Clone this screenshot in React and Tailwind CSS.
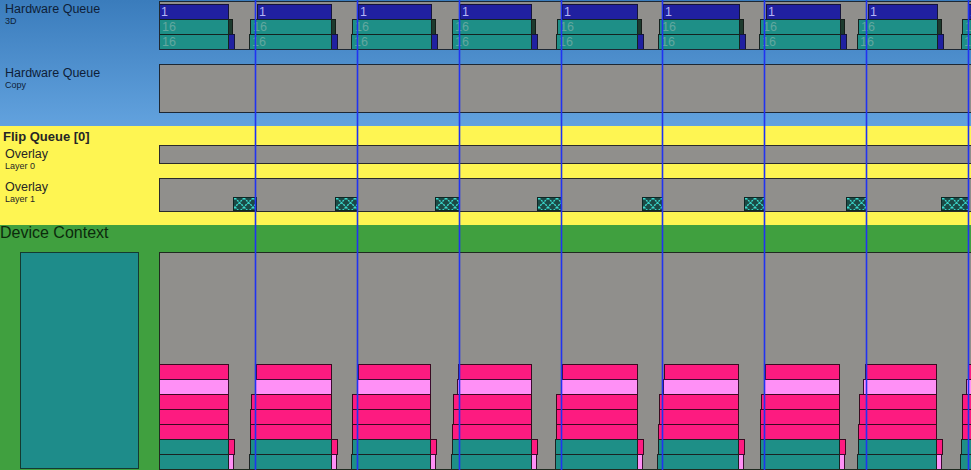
import React from 'react';

// page x of the chart interior (box border sits at 159)
const X0 = 160;
const LINES = [255, 357, 459, 561, 662, 764, 866, 968];

// hardware queue 3D packets [start, end]
const NAVY = [[159, 228], [257, 331], [358, 431], [460, 531], [562, 637], [663, 739], [766, 840], [868, 937], [968, 1010]];
const TEAL_A = [[159, 228], [250, 331], [352, 431], [452, 531], [557, 637], [659, 739], [760, 840], [858, 937], [962, 1010]];
const TEAL_B = [[159, 228], [249, 331], [351, 431], [452, 531], [556, 637], [658, 739], [759, 840], [857, 937], [961, 1010]];

// flip queue overlay layer 1 entries
const FLIPS = [[233, 256], [335, 357], [435, 459], [537, 561], [642, 662], [744, 764], [846, 866], [941, 968]];

// device context stacks: row starts + shared end
const STACKS = [
  { s: [159, 159, 159, 159, 159, 159, 159], e: 228 },
  { s: [256, 255, 251, 250, 250, 250, 249], e: 331 },
  { s: [358, 357, 352, 352, 352, 352, 351], e: 430 },
  { s: [458, 457, 453, 453, 452, 452, 451], e: 531 },
  { s: [562, 561, 556, 556, 556, 555, 555], e: 637 },
  { s: [664, 663, 659, 659, 658, 658, 657], e: 738 },
  { s: [765, 764, 761, 760, 760, 760, 760], e: 839 },
  { s: [865, 863, 859, 859, 858, 858, 857], e: 936 },
  { s: [968, 966, 962, 962, 962, 961, 960], e: 1010 },
];
const STACK_ROWS = [
  'bg-[#fd1b80] border-[#3a0a20]',
  'bg-[#ff90f6] border-[#3a0a30]',
  'bg-[#fd1b80] border-[#3a0a20]',
  'bg-[#fd1b80] border-[#3a0a20]',
  'bg-[#fd1b80] border-[#3a0a20]',
  'bg-[#1e8f87] border-[#1a2222]',
  'bg-[#1e8f87] border-[#1a2222]',
];

function Bar({ x1, x2, top, className, children }) {
  return (
    <div
      className={`absolute h-[16px] border overflow-hidden ${className}`}
      style={{ left: x1 - X0, width: x2 - x1 + 1, top }}
    >
      {children}
    </div>
  );
}

function Label({ title, sub, tone }) {
  return (
    <div className={`w-[159px] shrink-0 pl-[5px] pt-[2px] ${tone}`}>
      <div className="text-[12.5px] leading-[14px]">{title}</div>
      <div className="text-[9px] leading-[11px]">{sub}</div>
    </div>
  );
}

function Hatch({ id }) {
  return (
    <svg width="100%" height="100%" className="block">
      <defs>
        <pattern id={id} x="1" y="0" width="9" height="9" patternUnits="userSpaceOnUse">
          <path d="M0 0L9 9M9 0L0 9" stroke="#3ad8cc" strokeWidth="1.4" strokeDasharray="2 1" />
        </pattern>
      </defs>
      <rect width="100%" height="100%" fill={`url(#${id})`} />
    </svg>
  );
}

export default function App() {
  return (
    <div className="relative w-[971px] h-[470px] overflow-hidden font-['Liberation_Sans',Arial,sans-serif]">
      {/* Hardware queues */}
      <div className="h-[126px] flex flex-col bg-linear-to-b from-[#3a7cbc] to-[#62a2de]">
        <div className="flex h-[50px]">
          <Label title="Hardware Queue" sub="3D" tone="text-[#0e1e38]" />
          <div className="relative mt-[1px] h-[49px] w-[830px] shrink-0 border border-[#1d2733] bg-[#908f8c] overflow-hidden">
            {NAVY.map(([a, b], i) => (
              <Bar key={'n' + i} x1={a} x2={b} top={2} className="bg-[#2020a0] border-[#14143a]">
                <span className="block pl-[1px] text-[12.5px] leading-[14px] text-[#b4b4f4]">1</span>
              </Bar>
            ))}
            {TEAL_A.map(([a, b], i) => (
              <React.Fragment key={'a' + i}>
                <Bar x1={b} x2={b + 4} top={17} className="bg-[#1d3a2e] border-[#141c18]" />
                <Bar x1={a} x2={b} top={17} className="bg-[#1e8f87] border-[#14221f]">
                  <span className="block pl-[2px] text-[12.5px] leading-[14px] text-[#62a79f]">16</span>
                </Bar>
              </React.Fragment>
            ))}
            {TEAL_B.map(([a, b], i) => (
              <React.Fragment key={'b' + i}>
                <Bar x1={b} x2={b + 6} top={32} className="bg-[#2020a0] border-[#14143a]" />
                <Bar x1={a} x2={b} top={32} className="bg-[#1e8f87] border-[#14221f]">
                  <span className="block pl-[2px] text-[12.5px] leading-[14px] text-[#62a79f]">16</span>
                </Bar>
              </React.Fragment>
            ))}
          </div>
        </div>
        <div className="flex mt-[14px]">
          <Label title="Hardware Queue" sub="Copy" tone="text-[#0e1e38]" />
          <div className="h-[49px] w-[830px] shrink-0 border border-[#1d2733] bg-[#908f8c]" />
        </div>
      </div>

      {/* Flip queue */}
      <div className="h-[99px] flex flex-col bg-[#fef552] text-[#262626]">
        <div className="h-[19px] pl-[3px] pt-[3px] text-[13px] font-bold leading-[15px]">Flip Queue [0]</div>
        <div className="flex h-[19px]">
          <Label title="Overlay" sub="Layer 0" tone="text-[#262626]" />
          <div className="h-[19px] w-[830px] shrink-0 border border-[#2a2a2a] bg-[#908f8c]" />
        </div>
        <div className="flex h-[34px] mt-[14px]">
          <Label title="Overlay" sub="Layer 1" tone="text-[#262626]" />
          <div className="relative h-[34px] w-[830px] shrink-0 border border-[#2a2a2a] bg-[#908f8c] overflow-hidden">
            {FLIPS.map(([a, b], i) => (
              <div
                key={i}
                className="absolute top-[18px] h-[14px] border border-[#0d2624] bg-[#1b4a46]"
                style={{ left: a - X0, width: b - a + 1 }}
              >
                <Hatch id={'hatch' + i} />
              </div>
            ))}
          </div>
        </div>
      </div>

      {/* Device context */}
      <div className="h-[245px] flex flex-col bg-[#40a03f]">
        <div className="h-[27px] text-[16px] leading-[16px] text-[#0c2a0c]">Device Context</div>
        <div className="flex">
          <div className="w-[159px] shrink-0">
            <div className="ml-[20px] w-[119px] h-[217px] border border-[#143a30] bg-[#1e8c8a]" />
          </div>
          <div className="relative h-[218px] w-[830px] shrink-0 border border-[#1f2a1f] bg-[#908f8c] overflow-hidden">
            {STACKS.map((st, i) => (
              <React.Fragment key={i}>
                <Bar x1={st.e} x2={st.e + 6} top={186} className="bg-[#fd1b80] border-[#3a0a20]" />
                <Bar x1={st.e} x2={st.e + 5} top={201} className="bg-[#ff90f6] border-[#3a0a30]" />
                {st.s.map((x, r) => (
                  <Bar key={r} x1={x} x2={st.e} top={111 + r * 15} className={STACK_ROWS[r]} />
                ))}
              </React.Fragment>
            ))}
          </div>
        </div>
      </div>

      {/* time markers */}
      {LINES.map((x) => (
        <div
          key={x}
          className="absolute top-0 bottom-0 w-[1px] bg-[#2033f2] shadow-[1px_0_0_rgba(32,51,242,0.3),-1px_0_0_rgba(32,51,242,0.3)]"
          style={{ left: x }}
        />
      ))}
    </div>
  );
}
